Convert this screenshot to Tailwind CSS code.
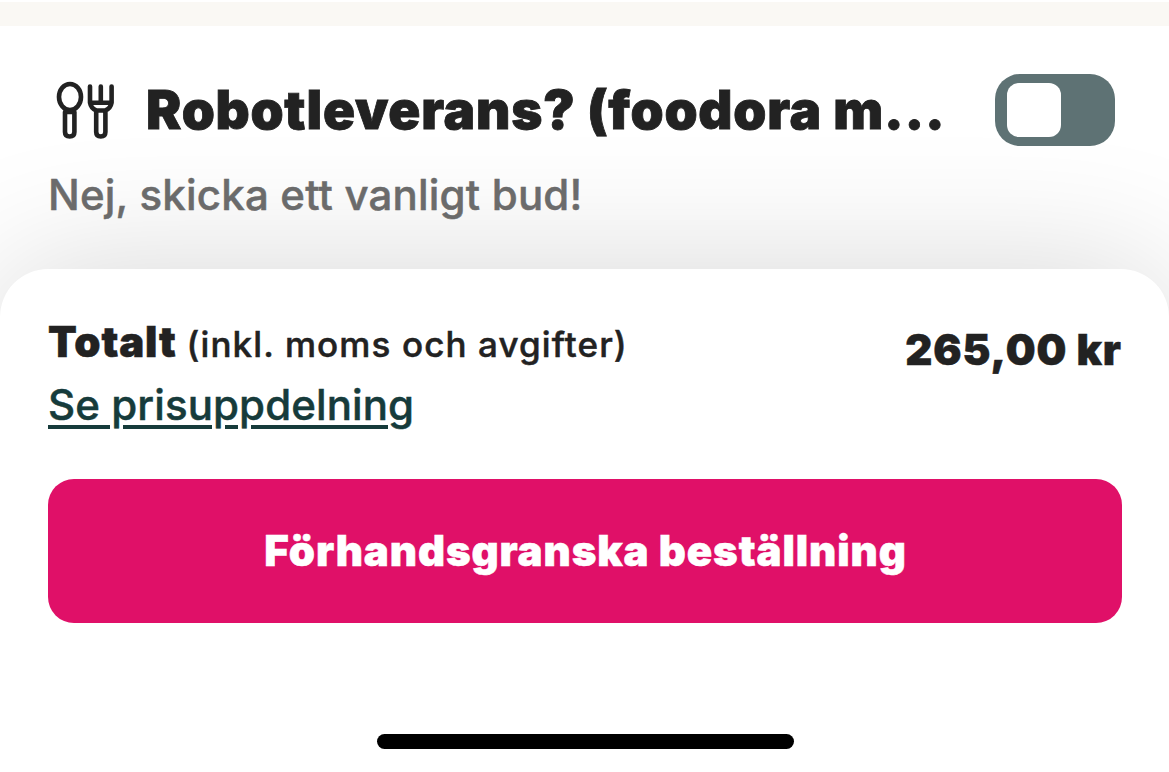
<!DOCTYPE html>
<html lang="sv"><head><meta charset="utf-8"><title>Kassa</title>
<script src="https://cdn.jsdelivr.net/npm/@tailwindcss/browser@4"></script></head>
<body class="w-[1169px] h-[772px] overflow-hidden bg-white font-['Inter',sans-serif] text-[#222]">
<div class="h-[26px] bg-[#faf8f4] border-t-2 border-white"></div>
<section class="relative z-10 h-[243px] px-12 pt-12">
<div class="flex items-center h-[72px]">
<svg class="w-[74px] h-[72px] shrink-0" viewBox="0 0 74 72" fill="none" stroke="#222" stroke-width="4.6" stroke-linecap="round" stroke-linejoin="round"><ellipse cx="22" cy="23" rx="11" ry="13"/><path d="M17 38H26.4V58Q26.4 62.5 21.7 62.5Q17 62.5 17 58Z"/><path d="M42 12.5V28.7H63.6V12.5M52.8 12.5V28.7M42 28.7Q43 34.5 48.2 36.5H57.4Q62.6 34.5 63.6 28.7M48.2 38V58Q48.2 62.5 52.8 62.5Q57.4 62.5 57.4 58V38"/></svg>
<h1 class="ml-[24px] pt-px text-[53px] tracking-[0.75px] font-black [-webkit-text-stroke:0.8px] whitespace-nowrap">Robotleverans? (foodora m...</h1>
<div class="ml-auto mr-[6px] w-[120px] h-[72px] shrink-0 rounded-[25px] bg-[#5e7274] py-[9px] px-3"><div class="size-[54px] rounded-xl bg-white"></div></div>
</div>
<p class="text-[42px] leading-[50px] mt-6 font-medium tracking-[0.2px] [-webkit-text-stroke:0.5px] text-[#6b6b6b]">Nej, skicka ett vanligt bud!</p>
</section>
<main class="h-[503px] rounded-t-[48px] bg-white px-12 pr-[47px] pt-[48px] shadow-[0_0_140px_rgba(0,0,0,0.16)]">
<div class="flex justify-between h-[162px]"><div>
<p class="leading-[50px] whitespace-nowrap"><span class="text-[42px] font-black tracking-[0.8px] [-webkit-text-stroke:0.5px]">Totalt</span><span class="ml-[10px] text-[35px] font-medium tracking-[1.1px] [-webkit-text-stroke:0.5px]">(inkl. moms och avgifter)</span></p>
<a class="block text-[42px] leading-[60px] -mt-px font-medium tracking-[0.1px] underline decoration-4 underline-offset-[5px] [-webkit-text-stroke:0.5px] text-[#163b3b]">Se prisuppdelning</a></div>
<p class="text-[42px] leading-[66px] font-black tracking-[0.9px] [-webkit-text-stroke:0.5px]">265,00 kr</p></div>
<button class="block w-full h-[144px] pb-[2px] pl-[1px] rounded-[26px] bg-[#e01068] text-white text-[42px] tracking-[0.88px] font-black [-webkit-text-stroke:0.5px]">Förhandsgranska beställning</button>
<div class="mt-[111px] mx-auto w-[417px] h-[15px] rounded-full bg-black"></div>
</main></body></html>
